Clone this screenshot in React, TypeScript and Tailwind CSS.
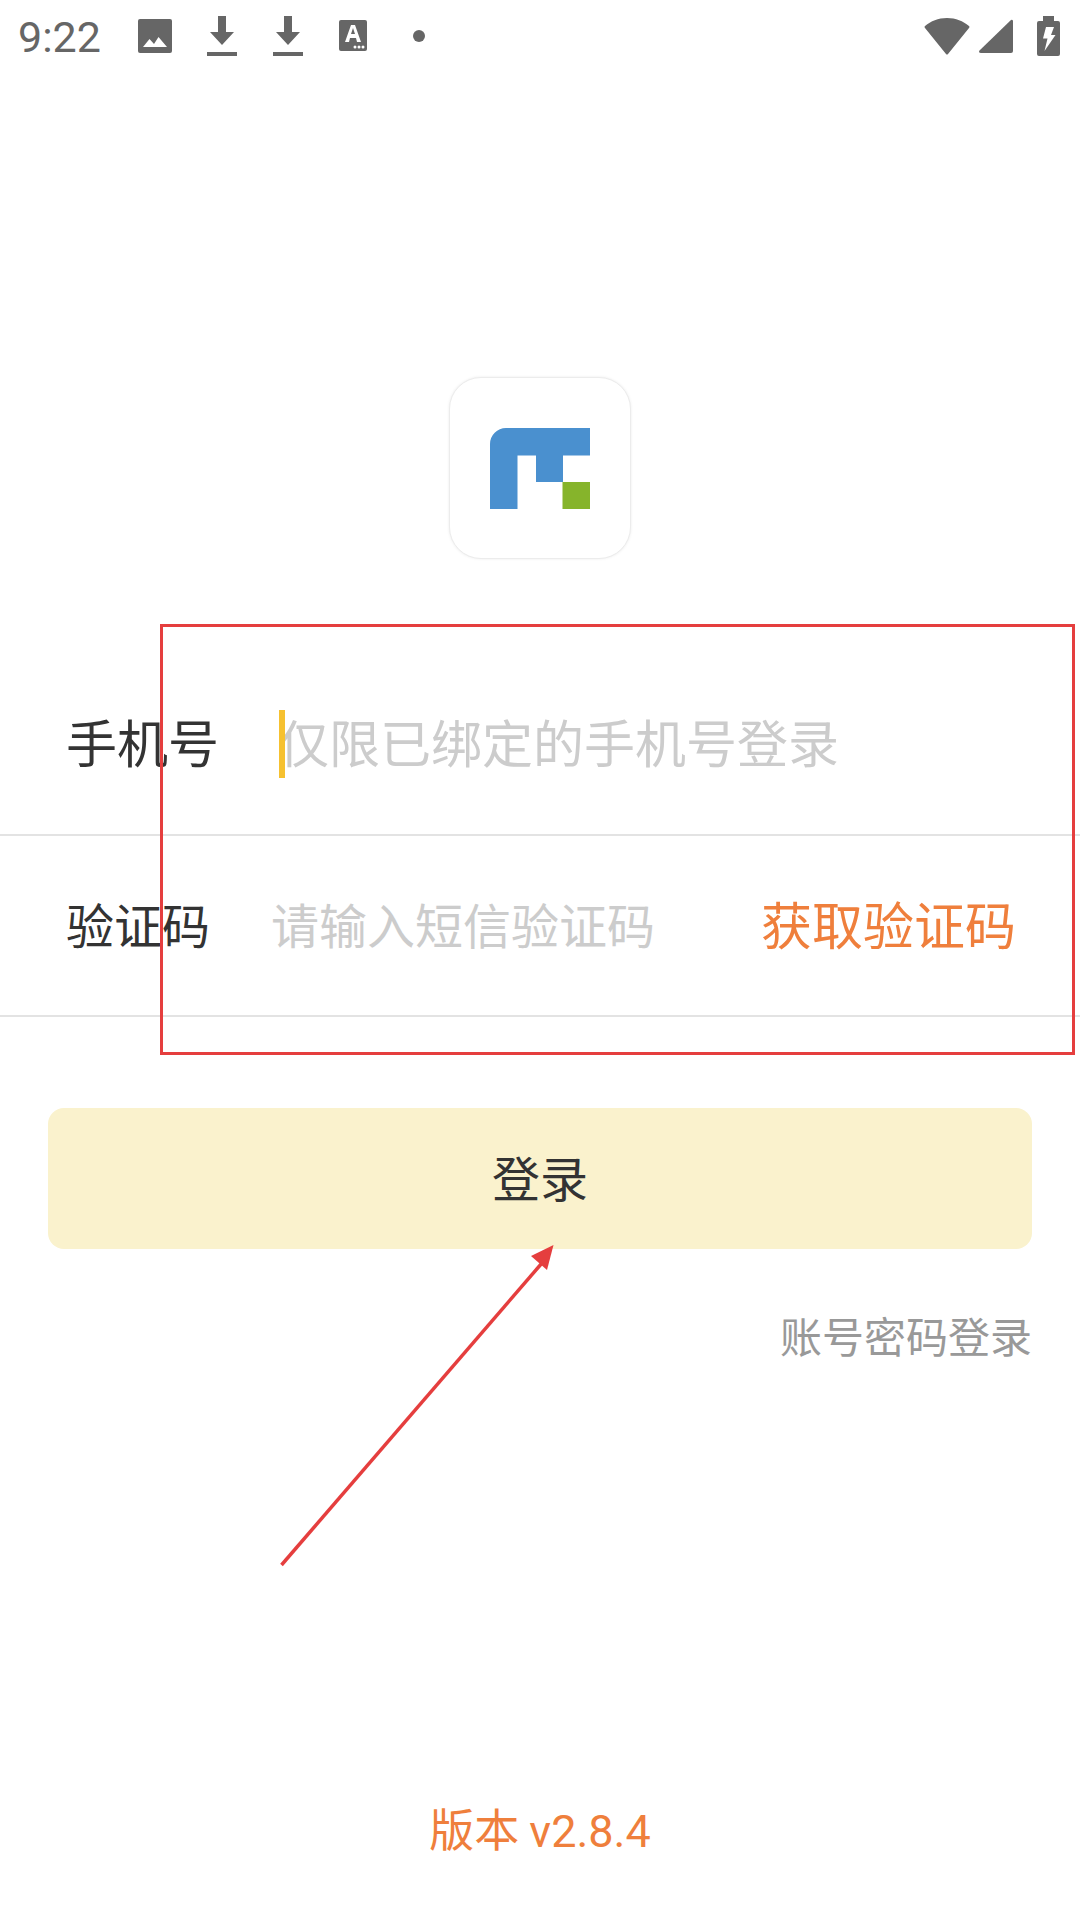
const cjk = "font-['Noto_Sans_CJK_SC','Noto_Sans',sans-serif]"

function StatusBar() {
  return (
    <div className="flex h-[72px] items-center text-[#666666]">
      <span className="ml-[18px] w-[86px] pt-[2px] font-['Roboto',sans-serif] text-[43px] leading-none">9:22</span>
      <svg className="ml-[33px]" width="36" height="36" viewBox="0 0 36 36">
        <path d="M3 1h30a2 2 0 0 1 2 2v30a2 2 0 0 1-2 2H3a2 2 0 0 1-2-2V3a2 2 0 0 1 2-2z" fill="currentColor" />
        <path d="M6 29l6.500-8 4.500 5 4.500-7L30 29z" fill="#fff" />
      </svg>
      <svg className="ml-[34px]" width="30" height="42" viewBox="0 0 30 42">
        <path d="M11 1h8v16h8L15 30 3 17h8z" fill="currentColor" />
        <rect y="37" width="30" height="4" fill="currentColor" />
      </svg>
      <svg className="ml-[36px]" width="30" height="42" viewBox="0 0 30 42">
        <path d="M11 1h8v16h8L15 30 3 17h8z" fill="currentColor" />
        <rect y="37" width="30" height="4" fill="currentColor" />
      </svg>
      <svg className="ml-[36px]" width="28" height="32" viewBox="0 0 28 32">
        <rect width="28" height="31" rx="2" fill="currentColor" />
        <path d="M6 22L12 5h4l6 17h-4l-1-4h-6l-1 4zM12 14h4l-2-6z" fill="#fff" />
        <circle cx="16" cy="27" r="1.500" fill="#fff" />
        <circle cx="20" cy="27" r="1.500" fill="#fff" />
        <circle cx="24" cy="27" r="1.500" fill="#fff" />
      </svg>
      <div className="ml-[46px] h-3 w-3 rounded-full bg-[#666666]" />
      <div className="flex-1" />
      <svg width="46" height="37" viewBox="0 0 46 37">
        <path d="M1 8C7 3 14 0 23 0s16 3 22 8a1.500 1.500 0 0 1 0 2L24 36a1.300 1.300 0 0 1-2 0L1 10a1.500 1.500 0 0 1 0-2z" fill="currentColor" />
      </svg>
      <svg className="ml-[8px]" width="36" height="36" viewBox="0 0 36 36">
        <path d="M33 2a1.500 1.500 0 0 1 2 1v30a2 2 0 0 1-2 2H3c-2 0-2.500-1.500-1.500-2.500z" fill="currentColor" />
      </svg>
      <svg className="ml-[23px] mr-[20px]" width="23" height="40" viewBox="0 0 23 40">
        <path d="M6 0h11v5h4a2 2 0 0 1 2 2v31a2 2 0 0 1-2 2H2a2 2 0 0 1-2-2V7a2 2 0 0 1 2-2h4z" fill="currentColor" />
        <path d="M9 11h8l-3 8h4.500L7.500 35l3-12.500H6z" fill="#fff" />
      </svg>
    </div>
  )
}

function Logo() {
  return (
    <div className="mx-auto mt-[305px] flex h-[182px] w-[182px] items-center justify-center rounded-[32px] border border-[#ececec] bg-white shadow-[0_0_3px_rgba(0,0,0,0.08)]">
      <svg width="100" height="81" viewBox="0 0 100 81">
        <path d="M16 0H100V27.500H73V54H46V27.500H27.500V81H0V16A16 16 0 0 1 16 0z" fill="#4a90cf" />
        <rect x="72.500" y="54" width="27.500" height="27" fill="#86b42b" />
      </svg>
    </div>
  )
}

export default function App() {
  return (
    <div className={`relative h-[1920px] w-[1080px] overflow-hidden bg-white ${cjk}`}>
      <StatusBar />
      <Logo />

      <div className="mt-[95px] flex h-[182px] items-center border-b-2 border-[#e3e3e3] pb-[5px] pl-[66px]">
        <span className="w-[214px] text-[51px] leading-none text-[#333333]">手机号</span>
        <span className="relative -ml-[2px] text-[51px] leading-none text-[#cccccc]">
          <span className="absolute left-[1px] top-[-6px] h-[68px] w-[6px] bg-[#f6c130]" />
          仅限已绑定的手机号登录
        </span>
      </div>

      <div className="flex h-[181px] items-center border-b-2 border-[#e3e3e3] pb-[5px] pl-[66px] pr-[64px]">
        <span className="w-[205px] text-[48px] leading-none text-[#333333]">验证码</span>
        <span className="flex-1 text-[48px] leading-none text-[#cccccc]">请输入短信验证码</span>
        <span className="text-[51px] leading-none text-[#ef7f3c]">获取验证码</span>
      </div>

      <div className="mx-[48px] mt-[91px] flex h-[141px] items-center justify-center rounded-[16px] bg-[#faf2cd] pb-[6px] text-[48px] text-[#333333]">
        登录
      </div>

      <div className="mr-[48px] mt-[65px] text-right text-[42px] leading-none text-[#999999]">账号密码登录</div>

      <div className="mt-[449px] text-center text-[45px] leading-none text-[#ef7f3c]">
        版本 <span className="font-['Roboto',sans-serif]">v2.8.4</span>
      </div>

      {/* annotation over the screenshot */}
      <div className="absolute left-[160px] top-[624px] h-[431px] w-[915px] border-[3px] border-[#e53e3e]" />
      <svg className="absolute left-0 top-0" width="1080" height="1920" viewBox="0 0 1080 1920" fill="none">
        <path d="M281.500 1565L542 1263" stroke="#e53e3e" strokeWidth="3.500" />
        <path d="M553.500 1245L531 1256L547 1270z" fill="#e53e3e" />
      </svg>
    </div>
  )
}
